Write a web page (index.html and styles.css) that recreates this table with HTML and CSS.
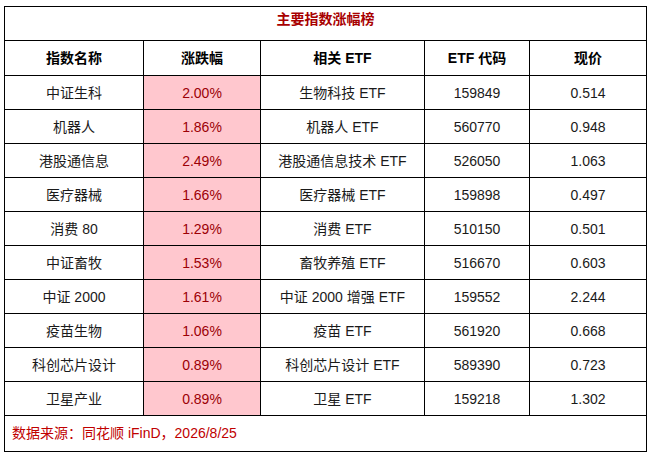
FILE: index.html
```html
<!DOCTYPE html>
<html lang="zh-CN">
<head>
<meta charset="utf-8">
<title>主要指数涨幅榜</title>
<link rel="stylesheet" href="styles.css">
</head>
<body>
<table class="board">
  <colgroup>
    <col class="c1"><col class="c2"><col class="c3"><col class="c4"><col class="c5">
  </colgroup>
  <tr class="title-row"><td colspan="5" class="title">主要指数涨幅榜</td></tr>
  <tr class="head-row">
    <th>指数名称</th><th>涨跌幅</th><th>相关 ETF</th><th>ETF 代码</th><th>现价</th>
  </tr>
  <tr><td>中证生科</td><td class="chg">2.00%</td><td>生物科技 ETF</td><td>159849</td><td>0.514</td></tr>
  <tr><td>机器人</td><td class="chg">1.86%</td><td>机器人 ETF</td><td>560770</td><td>0.948</td></tr>
  <tr><td>港股通信息</td><td class="chg">2.49%</td><td>港股通信息技术 ETF</td><td>526050</td><td>1.063</td></tr>
  <tr><td>医疗器械</td><td class="chg">1.66%</td><td>医疗器械 ETF</td><td>159898</td><td>0.497</td></tr>
  <tr><td>消费 80</td><td class="chg">1.29%</td><td>消费 ETF</td><td>510150</td><td>0.501</td></tr>
  <tr><td>中证畜牧</td><td class="chg">1.53%</td><td>畜牧养殖 ETF</td><td>516670</td><td>0.603</td></tr>
  <tr><td>中证 2000</td><td class="chg">1.61%</td><td>中证 2000 增强 ETF</td><td>159552</td><td>2.244</td></tr>
  <tr><td>疫苗生物</td><td class="chg">1.06%</td><td>疫苗 ETF</td><td>561920</td><td>0.668</td></tr>
  <tr><td>科创芯片设计</td><td class="chg">0.89%</td><td>科创芯片设计 ETF</td><td>589390</td><td>0.723</td></tr>
  <tr><td>卫星产业</td><td class="chg">0.89%</td><td>卫星 ETF</td><td>159218</td><td>1.302</td></tr>
  <tr class="foot-row"><td colspan="5" class="source">数据来源：同花顺 iFinD，2026/8/25</td></tr>
</table>
</body>
</html>
```
FILE: styles.css
```css
html, body {
  margin: 0;
  padding: 0;
  background: #ffffff;
}
body {
  padding: 6px 0 0 4px;
  font-family: "Liberation Sans", Arial, "Noto Sans CJK SC", sans-serif;
  font-size: 14px;
  color: #1a1a1a;
}
.board {
  border-collapse: collapse;
  table-layout: fixed;
  width: 642px;
}
.c1 { width: 139px; }
.c2 { width: 117px; }
.c3 { width: 164px; }
.c4 { width: 105px; }
.c5 { width: 117px; }
.board td, .board th {
  border: 1px solid #000;
  padding: 0;
  text-align: center;
  vertical-align: middle;
  height: 33px;
  line-height: 16px;
  white-space: nowrap;
}
.board th {
  font-weight: bold;
  color: #000;
  height: 34px;
}
.title-row .title {
  height: 33px;
  font-weight: bold;
  color: #a80000;
  vertical-align: top;
  padding-top: 4px;
  height: 29px;
}
.chg {
  background: #ffc7ce;
  color: #9c0006;
}
.foot-row .source {
  text-align: left;
  color: #c00000;
  padding-left: 7px;
  vertical-align: top;
  padding-top: 9px;
  height: 26px;
}
```
